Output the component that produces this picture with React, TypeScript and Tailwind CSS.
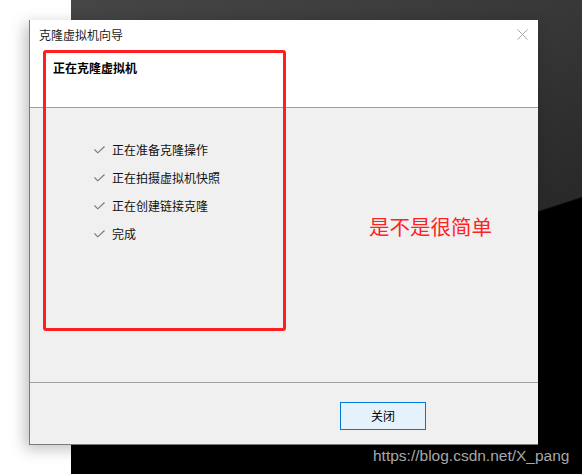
import React from 'react';

const steps = ['正在准备克隆操作', '正在拍摄虚拟机快照', '正在创建链接克隆', '完成'];

const Check: React.FC = () => (
  <svg width="11" height="8" viewBox="0 0 11 8" className="shrink-0">
    <polyline points="0.5,3.5 3.8,6.8 10.5,0.5" fill="none" stroke="#6f7780" strokeWidth="1.1" />
  </svg>
);

const App: React.FC = () => {
  return (
    <div
      className="relative w-[582px] h-[474px] overflow-hidden bg-white"
      style={{ fontFamily: '"Noto Sans CJK SC", "Microsoft YaHei", sans-serif' }}
    >
      {/* desktop behind the dialog */}
      <div className="absolute left-[71px] top-0 right-0 bottom-0 bg-[linear-gradient(162deg,#464646_0%,#2e2e2e_45%,#292929_56.6%,#000000_56.9%,#000000_100%)]" />

      {/* dialog window */}
      <div className="absolute left-[29px] top-[20px] w-[509px] h-[425px] flex flex-col bg-white border-l border-b border-[#7a7a7a] shadow-[-4px_4px_14px_rgba(0,0,0,0.25)]">
        <div className="h-[29px] flex items-center justify-between pl-[9px] pr-[10px]">
          <span className="text-[12px] text-[#1a1a1a] leading-none">克隆虚拟机向导</span>
          <svg width="11" height="11" viewBox="0 0 11 11">
            <path d="M0.5 0.5 L10.5 10.5 M10.5 0.5 L0.5 10.5" stroke="#a8a8a8" strokeWidth="1" />
          </svg>
        </div>
        <div className="h-[58px] pl-[23px] pt-[5px]">
          <span className="text-[12px] font-bold text-black leading-none">正在克隆虚拟机</span>
        </div>
        <div className="h-px bg-[#a0a0a0]" />
        <div className="flex-1 bg-[#f0f0f0] pt-[33px] pl-[64px]">
          <div className="flex flex-col gap-[10px]">
            {steps.map(s => (
              <div key={s} className="flex items-center gap-[7px] h-[18px]">
                <Check />
                <span className="text-[12px] text-[#111] leading-none">{s}</span>
              </div>
            ))}
          </div>
        </div>
        <div className="h-px bg-[#a0a0a0]" />
        <div className="h-[61px] bg-[#f0f0f0] flex justify-end items-start pt-[19px] pr-[112px]">
          <button className="w-[86px] h-[28px] bg-[#e5f1fb] border border-[#0078d7] text-[12px] text-black leading-none">
            关闭
          </button>
        </div>

        {/* annotations */}
        <div className="absolute left-[13px] top-[30px] w-[243px] h-[281px] border-[3px] border-[#ff1f1f] rounded-[3px]" />
        <span className="absolute left-[339px] top-[193px] text-[20.5px] leading-[26px] text-[#ff2222]">是不是很简单</span>
      </div>

      <span
        className="absolute left-[373px] top-[444px] text-[15.5px] text-[#a8a8a8]"
        style={{ fontFamily: '"Liberation Sans", Arial, sans-serif' }}
      >
        https://blog.csdn.net/X_pang
      </span>
    </div>
  );
};

export default App;
